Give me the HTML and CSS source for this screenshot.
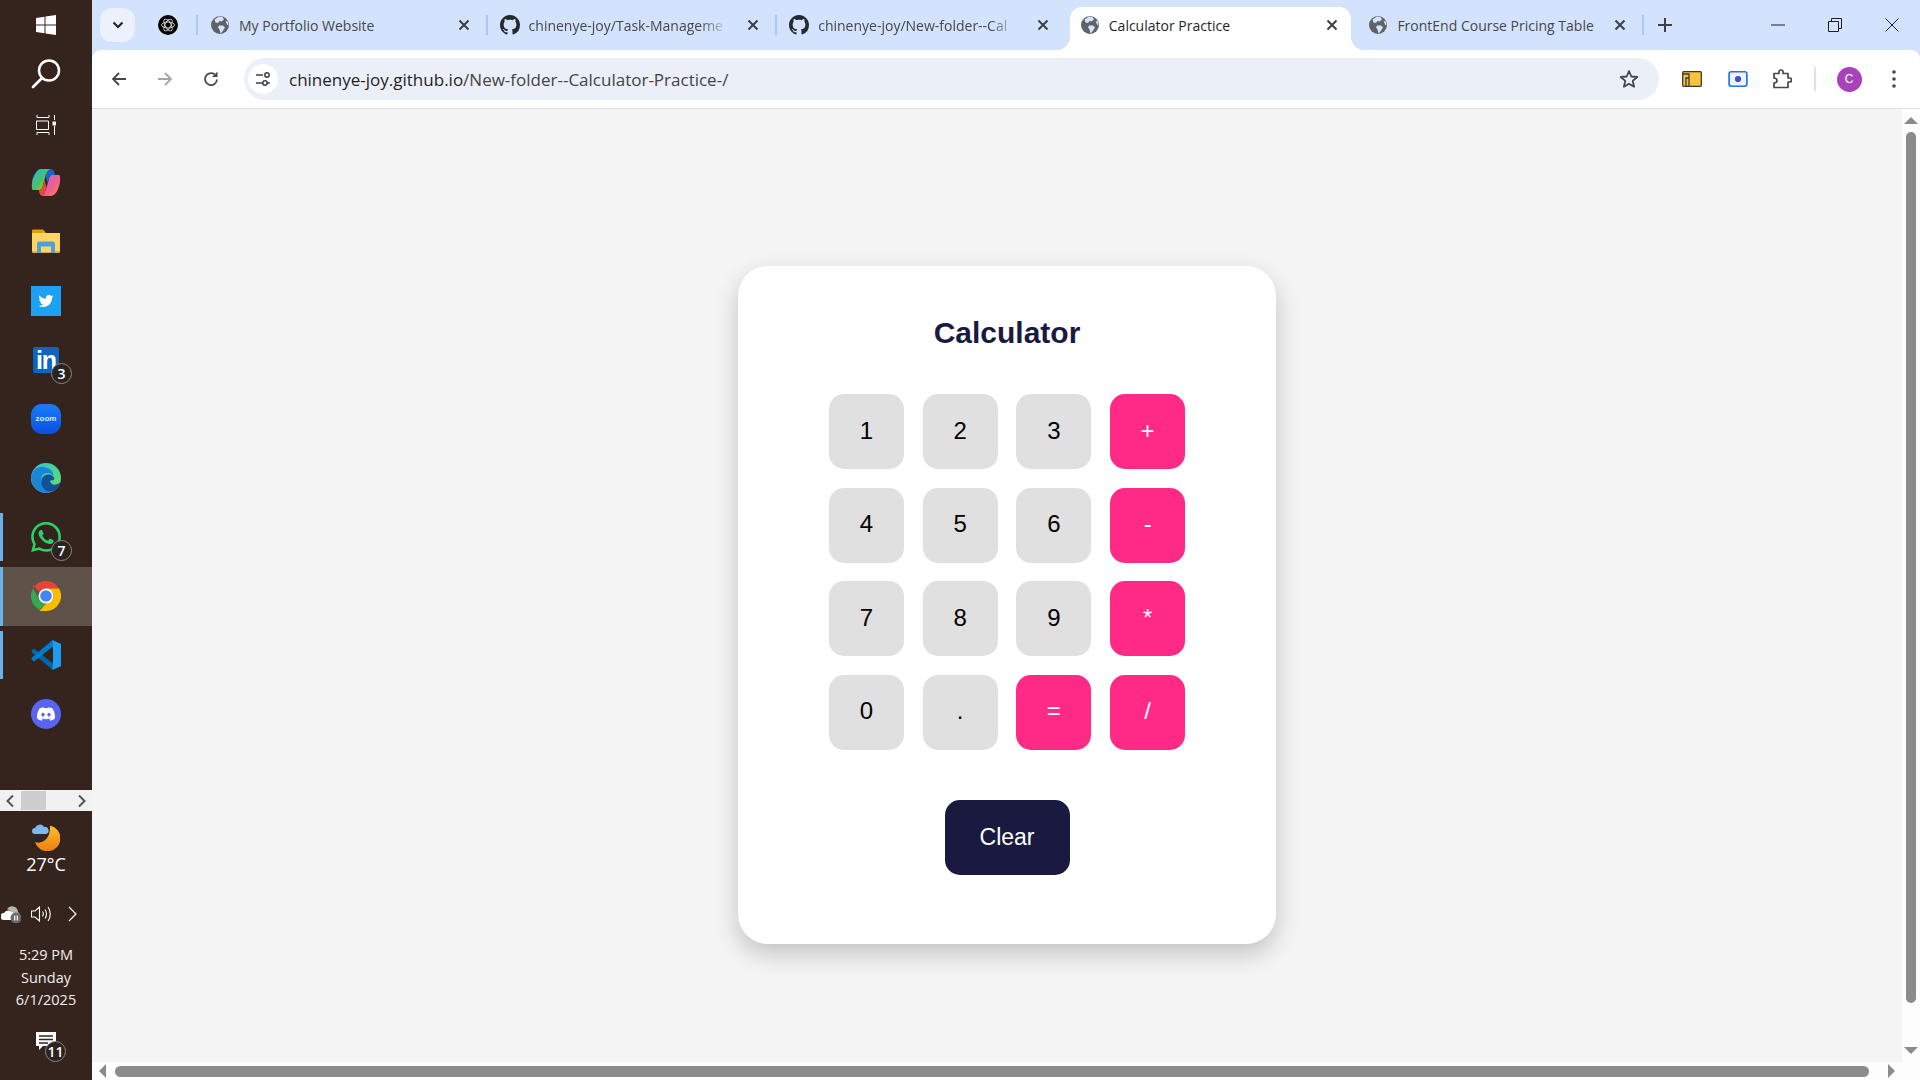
FILE: index.html
```html
<!DOCTYPE html>
<html lang="en">

<head>
    <meta charset="UTF-8">
    <title>Calculator Practice</title>
    <link rel="stylesheet" href="styles.css">
</head>

<body>
    <svg class="defs" width="0" height="0">
        <defs>
            <symbol id="globe" viewBox="0 0 20 20">
                <circle cx="10" cy="10" r="9" fill="#5f6368" />
                <path d="M9 1.5 12.5 2 14 4.5 11.5 6.5 9.5 6 8 8 5.5 7.5 4.5 4.5ZM9 10.5 13 10.5 15 12.5 12.5 16.5 10.5 18.5 9.5 14.5 8 12.5ZM15.5 6 18 6.5 18.5 10.5 17 9.5Z" fill="#d3e3fd" />
            </symbol>
            <symbol id="octo" viewBox="0 0 16 16">
                <path fill="#24292f" d="M8 0C3.58 0 0 3.58 0 8c0 3.54 2.29 6.53 5.47 7.59.4.07.55-.17.55-.38 0-.19-.01-.82-.01-1.49-2.01.37-2.53-.49-2.69-.94-.09-.23-.48-.94-.82-1.13-.28-.15-.68-.52-.01-.53.63-.01 1.08.58 1.23.82.72 1.21 1.87.87 2.33.66.07-.52.28-.87.51-1.07-1.78-.2-3.64-.89-3.64-3.95 0-.87.31-1.59.82-2.15-.08-.2-.36-1.02.08-2.12 0 0 .67-.21 2.2.82.64-.18 1.32-.27 2-.27.68 0 1.36.09 2 .27 1.53-1.04 2.2-.82 2.2-.82.44 1.1.16 1.92.08 2.12.51.56.82 1.27.82 2.15 0 3.07-1.87 3.75-3.65 3.95.29.25.54.73.54 1.48 0 1.07-.01 1.93-.01 2.2 0 .21.15.46.55.38A8.013 8.013 0 0016 8c0-4.42-3.58-8-8-8z" />
            </symbol>
            <symbol id="cross" viewBox="0 0 12 12">
                <path d="M1.5 1.5 10.5 10.5M10.5 1.5 1.5 10.5" stroke="#3c4043" stroke-width="2" fill="none" />
            </symbol>
        </defs>
    </svg>

    <div class="screen">
        <!-- vertical windows taskbar -->
        <aside class="taskbar">
            <div class="tb-start">
                <svg class="ic-win" viewBox="0 0 20 20">
                    <path fill="#fff" d="M0 3 8.5 1.8V9.5H0ZM9.5 1.6 20 0V9.5H9.5ZM0 10.5H8.5V18.2L0 17ZM9.5 10.5H20V20L9.5 18.4Z" />
                </svg>
            </div>
            <div class="tb-search">
                <svg class="ic-search" viewBox="0 0 30 30">
                    <circle cx="18" cy="11.5" r="10" fill="none" stroke="#fff" stroke-width="2.5" />
                    <path d="M11 19 2 28" stroke="#fff" stroke-width="2.8" stroke-linecap="round" />
                </svg>
            </div>
            <div class="tb-view">
                <svg class="ic-view" viewBox="0 0 20 20">
                    <path fill="none" stroke="#fff" d="M1 0V2.5H13V0M.5 6H12.5V14.5H.5ZM1 20V17.5H13V20M18.5 0V5M18.5 11V20" />
                    <rect x="16.5" y="6.5" width="4" height="4" fill="#fff" />
                </svg>
            </div>

            <div class="tb-item">
                <svg class="ic-app" viewBox="0 0 30 30">
                    <defs>
                        <linearGradient id="cpA" x1="0" y1="0" x2="1" y2="1">
                            <stop offset="0" stop-color="#22b5e8" />
                            <stop offset=".55" stop-color="#4fc25f" />
                            <stop offset="1" stop-color="#f3c623" />
                        </linearGradient>
                        <linearGradient id="cpB" x1="0" y1="0" x2="1" y2="1">
                            <stop offset="0" stop-color="#c064e0" />
                            <stop offset=".6" stop-color="#f0608a" />
                            <stop offset="1" stop-color="#f8923c" />
                        </linearGradient>
                    </defs>
                    <path fill="url(#cpA)" d="M10 1H20C17 2 15.5 5 14.5 8L11.5 19C11 21 9.5 22 8 22H1.5C0 18 1 10 4 6 5.5 3 7.5 1 10 1Z" />
                    <path fill="url(#cpB)" d="M20 28H11C13 27 14.5 23 15.5 19.5L18.5 9C19 7 20.5 7 22 7H28.5C30 11 29 17 26.5 22 25 25.5 22.5 28 20 28Z" />
                    <path fill="#1a62d8" d="M20 1C22 1 23.5 3 24 7H21C19 7 18.5 8 18 10L16.5 15 14.5 8C15.5 5 17 2 20 1Z" />
                    <path fill="#e8483c" d="M8 22C9.5 22 11 21 11.5 19L13.5 12 15.5 19.5C14.5 23 13 27 11 28 9 27.5 8 25 8 22Z" />
                </svg>
            </div>
            <div class="tb-item">
                <svg class="ic-app" viewBox="0 0 30 30">
                    <path fill="#e0a100" d="M1 3.5C1 3 1.5 2.5 2 2.5H12L15 6H1Z" />
                    <path fill="#fbd664" d="M1 6H29V24.5C29 25.2 28.5 25.7 28 25.7H2C1.5 25.7 1 25.2 1 24.5Z" />
                    <path fill="#e7b33c" d="M1 24H6V25.7H2C1.5 25.7 1 25.2 1 24.5ZM24 24H29V24.5C29 25.2 28.5 25.7 28 25.7H24Z" />
                    <path fill="#4f9fdd" d="M6 25.7V17C6 15.5 7 14.5 8.5 14.5H21.5C23 14.5 24 15.5 24 17V25.7H20V19.5H10V25.7Z" />
                </svg>
            </div>
            <div class="tb-item">
                <svg class="ic-app" viewBox="0 0 30 30">
                    <rect width="30" height="30" fill="#1da1f2" />
                    <svg x="7.5" y="7.5" width="15" height="15" viewBox="0 0 24 24">
                        <path fill="#fff" d="M23.953 4.57a10 10 0 01-2.825.775 4.958 4.958 0 002.163-2.723c-.951.555-2.005.959-3.127 1.184a4.92 4.92 0 00-8.384 4.482C7.69 8.095 4.067 6.13 1.64 3.162a4.822 4.822 0 00-.666 2.475c0 1.71.87 3.213 2.188 4.096a4.904 4.904 0 01-2.228-.616v.06a4.923 4.923 0 003.946 4.827 4.996 4.996 0 01-2.212.085 4.936 4.936 0 004.604 3.417 9.867 9.867 0 01-6.102 2.105c-.39 0-.779-.023-1.17-.067a13.995 13.995 0 007.557 2.209c9.053 0 13.998-7.496 13.998-13.985 0-.21 0-.42-.015-.63A9.935 9.935 0 0024 4.59z" />
                    </svg>
                </svg>
            </div>
            <div class="tb-item">
                <div class="ic-in">in</div>
                <span class="badge">3</span>
            </div>
            <div class="tb-item">
                <div class="ic-zoom">zoom</div>
            </div>
            <div class="tb-item">
                <svg class="ic-app" viewBox="0 0 30 30">
                    <defs>
                        <linearGradient id="edgeA" x1="0" y1="0" x2="1" y2="1">
                            <stop offset="0" stop-color="#2cc6d8" />
                            <stop offset="1" stop-color="#6fdc5c" />
                        </linearGradient>
                    </defs>
                    <circle cx="15" cy="15" r="15" fill="url(#edgeA)" />
                    <path fill="#1b86d8" d="M.1 14C1 7 7 3 13 4 19 5 23 9 22.5 13 19 8.5 12 9.5 10.5 14 9 20 14 28 21 28.5 18 30 15 30.2 12 29.8 5 28 0 22 .1 14Z" />
                    <path fill="#134f9a" d="M22 13.5C24 15 24 17 20.5 17.5H19C19 20 22 22.5 25 21.5 27 21 28.5 20 30 18.5 28.5 24 24 28.5 19 28.5 13 28.5 9.5 22 10.5 17 11.5 12 18.5 9.5 22 13.5Z" />
                </svg>
            </div>
            <div class="tb-item tb-open">
                <svg class="ic-app" viewBox="0 0 24 24">
                    <path fill="#25d366" d="M17.472 14.382c-.297-.149-1.758-.867-2.03-.967-.273-.099-.471-.148-.67.15-.197.297-.767.966-.94 1.164-.173.199-.347.223-.644.075-.297-.15-1.255-.463-2.39-1.475-.883-.788-1.48-1.761-1.653-2.059-.173-.297-.018-.458.13-.606.134-.133.298-.347.446-.52.149-.174.198-.298.298-.497.099-.198.05-.371-.025-.52-.075-.149-.669-1.612-.916-2.207-.242-.579-.487-.5-.669-.51-.173-.008-.371-.01-.57-.01-.198 0-.52.074-.792.372-.272.297-1.04 1.016-1.04 2.479 0 1.462 1.065 2.875 1.213 3.074.149.198 2.096 3.2 5.077 4.487.709.306 1.262.489 1.694.625.712.227 1.36.195 1.871.118.571-.085 1.758-.719 2.006-1.413.248-.694.248-1.289.173-1.413-.074-.124-.272-.198-.57-.347m-5.421 7.403h-.004a9.87 9.87 0 01-5.031-1.378l-.361-.214-3.741.982.998-3.648-.235-.374a9.86 9.86 0 01-1.51-5.26c.001-5.45 4.436-9.884 9.888-9.884 2.64 0 5.122 1.03 6.988 2.898a9.825 9.825 0 012.893 6.994c-.003 5.45-4.437 9.884-9.885 9.884m8.413-18.297A11.815 11.815 0 0012.05 0C5.495 0 .16 5.335.157 11.892c0 2.096.547 4.142 1.588 5.945L.057 24l6.305-1.654a11.882 11.882 0 005.683 1.448h.005c6.554 0 11.89-5.335 11.893-11.893a11.821 11.821 0 00-3.48-8.413z" />
                </svg>
                <span class="badge">7</span>
            </div>
            <div class="tb-item tb-open tb-active">
                <svg class="ic-app" viewBox="0 0 30 30">
                    <path fill="#ea4335" d="M15 0A15 15 0 0 1 28 7.5H15A7.5 7.5 0 0 0 8.5 11.25L2 3.75 2 7.5A15 15 0 0 1 15 0Z" />
                    <path fill="#34a853" d="M2 7.5 8.5 18.75A7.5 7.5 0 0 0 15 22.5L8.5 29 7.5 28A15 15 0 0 1 2 7.5Z" />
                    <path fill="#fbbc04" d="M28 7.5A15 15 0 0 1 15 30H8.5L15 22.5 21.5 18.75A7.5 7.5 0 0 0 21.5 11.25L15 7.5Z" />
                    <circle cx="15" cy="15" r="7.5" fill="#fff" />
                    <circle cx="15" cy="15" r="5.8" fill="#4285f4" />
                </svg>
            </div>
            <div class="tb-item tb-open">
                <svg class="ic-app" viewBox="0 0 30 30">
                    <path fill="#0065a9" d="M.5 10.5 3 8.5 22 23.5V28L21.5 30 1 12.5Z" />
                    <path fill="#007acc" d="M.5 19.5 3 21.5 22 6.5V2L21.5 0 1 17.5Z" />
                    <path fill="#1f9cf0" d="M21.5 0 30 4V26L21.5 30 22 22V8Z" />
                </svg>
            </div>
            <div class="tb-item">
                <svg class="ic-app" viewBox="0 0 30 30">
                    <circle cx="15" cy="15" r="15" fill="#5865f2" />
                    <svg x="6" y="6" width="18" height="18" viewBox="0 0 24 24">
                        <path fill="#fff" d="M20.317 4.3698a19.7913 19.7913 0 00-4.8851-1.5152.0741.0741 0 00-.0785.0371c-.211.3753-.4447.8648-.6083 1.2495-1.8447-.2762-3.68-.2762-5.4868 0-.1636-.3933-.4058-.8742-.6177-1.2495a.077.077 0 00-.0785-.037 19.7363 19.7363 0 00-4.8852 1.515.0699.0699 0 00-.0321.0277C.5334 9.0458-.319 13.5799.0992 18.0578a.0824.0824 0 00.0312.0561c2.0528 1.5076 4.0413 2.4228 5.9929 3.0294a.0777.0777 0 00.0842-.0276c.4616-.6304.8731-1.2952 1.226-1.9942a.076.076 0 00-.0416-.1057c-.6528-.2476-1.2743-.5495-1.8722-.8923a.077.077 0 01-.0076-.1277c.1258-.0943.2517-.1923.3718-.2914a.0743.0743 0 01.0776-.0105c3.9278 1.7933 8.18 1.7933 12.0614 0a.0739.0739 0 01.0785.0095c.1202.099.246.1981.3728.2924a.077.077 0 01-.0066.1276 12.2986 12.2986 0 01-1.873.8914.0766.0766 0 00-.0407.1067c.3604.698.7719 1.3628 1.225 1.9932a.076.076 0 00.0842.0286c1.961-.6067 3.9495-1.5219 6.0023-3.0294a.077.077 0 00.0313-.0552c.5004-5.177-.8382-9.6739-3.5485-13.6604a.061.061 0 00-.0312-.0286zM8.02 15.3312c-1.1825 0-2.1569-1.0857-2.1569-2.419 0-1.3332.9555-2.4189 2.157-2.4189 1.2108 0 2.1757 1.0952 2.1568 2.419 0 1.3332-.9555 2.4189-2.1569 2.4189zm7.9748 0c-1.1825 0-2.1569-1.0857-2.1569-2.419 0-1.3332.9554-2.4189 2.1569-2.4189 1.2108 0 2.1757 1.0952 2.1568 2.419 0 1.3332-.946 2.4189-2.1568 2.4189Z" />
                    </svg>
                </svg>
            </div>

            <div class="tb-scroll">
                <svg class="ic-chev" viewBox="0 0 10 14">
                    <path d="M8 1.5 2.5 7 8 12.5" fill="none" stroke="#555" stroke-width="2" />
                </svg>
                <div class="tb-scroll-thumb"></div>
                <svg class="ic-chev" viewBox="0 0 10 14">
                    <path d="M2 1.5 7.5 7 2 12.5" fill="none" stroke="#555" stroke-width="2" />
                </svg>
            </div>

            <div class="tb-weather">
                <svg class="ic-weather" viewBox="0 0 28 28">
                    <defs>
                        <linearGradient id="moon" x1="0" y1="0" x2="0" y2="1">
                            <stop offset="0" stop-color="#fbc02d" />
                            <stop offset="1" stop-color="#ee7d12" />
                        </linearGradient>
                    </defs>
                    <path fill="url(#moon)" d="M18 2.5A13 13 0 1 1 3 19C11 22 19 15 18 2.5Z" />
                    <path fill="#7fb8f0" d="M3 11A3 3 0 0 1 3 5 5 5 0 0 1 12 4 3.5 3.5 0 0 1 14 11Z" />
                </svg>
                <div class="temp">27°C</div>
            </div>

            <div class="tb-tray">
                <svg class="ic-cloud" viewBox="0 0 20 18">
                    <path fill="#fff" d="M3 15A3.5 3.5 0 0 1 3 8 5 5 0 0 1 11 7H14V15Z" />
                    <path fill="#b9b4b0" d="M6 4A6 6 0 0 1 17 7 4 4 0 0 1 18 12H14C14 9 12 7 10 7 9 5.5 7.5 4.5 6 4Z" />
                    <circle cx="15" cy="13" r="5.5" fill="#6b6b6b" />
                    <path d="M13.7 10.5V15.5M16.3 10.5V15.5" stroke="#fff" stroke-width="1.2" />
                </svg>
                <svg class="ic-sound" viewBox="0 0 21 18">
                    <path fill="none" stroke="#fff" stroke-width="1.1" d="M.5 6H4L8.5 2V16L4 12H.5ZM11.5 6.5C12.5 8 12.5 10 11.5 11.5M14 4.5C16 7 16 11 14 13.5M17 2C20 6 20 12 17 16" />
                </svg>
                <svg class="ic-more" viewBox="0 0 9 16">
                    <path d="M1 1 8 8 1 15" fill="none" stroke="#fff" stroke-width="1.2" />
                </svg>
            </div>

            <div class="tb-clock">
                <div>5:29 PM</div>
                <div>Sunday</div>
                <div>6/1/2025</div>
            </div>

            <div class="tb-notify">
                <svg class="ic-chat" viewBox="0 0 20 19">
                    <path fill="#fff" d="M0 0H20V14H7L3 18V14H0Z" />
                    <path d="M3 4H17M3 7.5H17M3 11H12" stroke="#35241e" stroke-width="1.3" />
                </svg>
                <span class="badge badge-wide">11</span>
            </div>
        </aside>

        <div class="browser">
            <div class="tabstrip">
                <div class="tab-list-btn">
                    <svg class="ic-down" viewBox="0 0 12 8">
                        <path d="M1.5 1.5 6 6 10.5 1.5" fill="none" stroke="#1f1f1f" stroke-width="2" />
                    </svg>
                </div>
                <div class="pinned">
                    <svg class="ic-fav" viewBox="0 0 20 20">
                        <circle cx="10" cy="10" r="10" fill="#000" />
                        <g fill="none" stroke="#ddd" stroke-width=".9">
                            <ellipse cx="10" cy="10" rx="6.5" ry="3" />
                            <ellipse cx="10" cy="10" rx="6.5" ry="3" transform="rotate(60 10 10)" />
                            <ellipse cx="10" cy="10" rx="6.5" ry="3" transform="rotate(120 10 10)" />
                        </g>
                    </svg>
                </div>
                <span class="tab-sep"></span>
                <div class="tab">
                    <svg class="ic-fav"><use href="#globe" /></svg>
                    <span class="tab-title">My Portfolio Website</span>
                    <svg class="ic-x"><use href="#cross" /></svg>
                </div>
                <span class="tab-sep"></span>
                <div class="tab">
                    <svg class="ic-fav"><use href="#octo" /></svg>
                    <span class="tab-title tab-fade">chinenye-joy/Task-Manageme</span>
                    <svg class="ic-x"><use href="#cross" /></svg>
                </div>
                <span class="tab-sep"></span>
                <div class="tab">
                    <svg class="ic-fav"><use href="#octo" /></svg>
                    <span class="tab-title tab-fade">chinenye-joy/New-folder--Cal</span>
                    <svg class="ic-x"><use href="#cross" /></svg>
                </div>
                <span class="tab-sep tab-sep-off"></span>
                <div class="tab tab-active">
                    <svg class="ic-fav"><use href="#globe" /></svg>
                    <span class="tab-title">Calculator Practice</span>
                    <svg class="ic-x"><use href="#cross" /></svg>
                </div>
                <span class="tab-sep tab-sep-off"></span>
                <div class="tab tab-last">
                    <svg class="ic-fav"><use href="#globe" /></svg>
                    <span class="tab-title">FrontEnd Course Pricing Table</span>
                    <svg class="ic-x"><use href="#cross" /></svg>
                </div>
                <span class="tab-sep"></span>
                <svg class="ic-plus" viewBox="0 0 14 14">
                    <path d="M7 0V14M0 7H14" stroke="#3c4043" stroke-width="2" />
                </svg>
                <div class="win-btns">
                    <div class="win-btn">
                        <svg class="ic-win-btn" viewBox="0 0 14 14">
                            <path d="M0 7H14" stroke="#1f1f1f" />
                        </svg>
                    </div>
                    <div class="win-btn">
                        <svg class="ic-win-btn" viewBox="0 0 14 14">
                            <path d="M.5 3.5H10.5V13.5H.5ZM3.5 3.5V.5H13.5V10.5H10.5" fill="none" stroke="#1f1f1f" />
                        </svg>
                    </div>
                    <div class="win-btn">
                        <svg class="ic-win-btn" viewBox="0 0 14 14">
                            <path d="M.5.5 13.5 13.5M13.5.5 .5 13.5" stroke="#1f1f1f" />
                        </svg>
                    </div>
                </div>
            </div>

            <div class="toolbar">
                <div class="tool-btn">
                    <svg class="ic-tool" viewBox="0 0 18 18">
                        <path d="M16 9H3M9 3 3 9 9 15" fill="none" stroke="#474747" stroke-width="1.8" />
                    </svg>
                </div>
                <div class="tool-btn">
                    <svg class="ic-tool" viewBox="0 0 18 18">
                        <path d="M2 9H15M9 3 15 9 9 15" fill="none" stroke="#a3a5a8" stroke-width="1.8" />
                    </svg>
                </div>
                <div class="tool-btn">
                    <svg class="ic-tool" viewBox="0 0 18 18">
                        <path d="M15 9.5A6 6 0 1 1 12.5 4.2" fill="none" stroke="#474747" stroke-width="1.8" />
                        <path d="M15.5 1.5V7H10Z" fill="#474747" />
                    </svg>
                </div>
                <div class="omnibox">
                    <div class="site-info">
                        <svg class="ic-tune" viewBox="0 0 16 16">
                            <path d="M1 4H8M1 12H8M11 12H15" stroke="#3c4043" stroke-width="1.6" fill="none" />
                            <circle cx="12" cy="4" r="2.2" fill="none" stroke="#3c4043" stroke-width="1.5" />
                            <circle cx="10" cy="12" r="2.2" fill="#fff" stroke="#3c4043" stroke-width="1.5" />
                        </svg>
                    </div>
                    <span class="url"><b class="url-host">chinenye-joy.github.io</b>/New-folder--Calculator-Practice-/</span>
                    <svg class="ic-star" viewBox="0 0 20 20">
                        <path d="M10 2 12.3 7.5 18.3 8 13.7 11.9 15.1 17.8 10 14.7 4.9 17.8 6.3 11.9 1.7 8 7.7 7.5Z" fill="none" stroke="#474747" stroke-width="1.8" stroke-linejoin="round" />
                    </svg>
                </div>
                <div class="tool-btn tool-first">
                    <svg class="ic-ext" viewBox="0 0 20 16">
                        <rect x=".7" y=".7" width="18.6" height="14.6" rx="1" fill="#f9c33c" stroke="#3a3a3a" stroke-width="1.3" />
                        <path d="M1 3H7V15M4 15V7H7" fill="none" stroke="#3a3a3a" stroke-width="1.3" />
                    </svg>
                </div>
                <div class="tool-btn">
                    <svg class="ic-ext" viewBox="0 0 18 16">
                        <rect x="1" y="1.5" width="16" height="13" rx="2" fill="#eef3fe" stroke="#1a73e8" stroke-width="1.5" />
                        <circle cx="9" cy="8" r="2.8" fill="#3b50d6" />
                    </svg>
                </div>
                <div class="tool-btn tool-puzzle">
                    <svg class="ic-ext" viewBox="0 0 20 20">
                        <path d="M2 4.5H7V3A2 2 0 0 1 11 3V4.5H16V9H17.5A2 2 0 0 1 17.5 13H16V18.5H2V14C4.5 14 5 12.5 5 11.5 5 10.5 4 9 2 9Z" fill="none" stroke="#474747" stroke-width="1.7" stroke-linejoin="round" />
                    </svg>
                </div>
                <span class="tool-sep"></span>
                <div class="tool-btn">
                    <span class="avatar">C</span>
                </div>
                <div class="tool-btn tool-menu">
                    <svg class="ic-dots" viewBox="0 0 4 18">
                        <circle cx="2" cy="2" r="1.8" fill="#474747" />
                        <circle cx="2" cy="9" r="1.8" fill="#474747" />
                        <circle cx="2" cy="16" r="1.8" fill="#474747" />
                    </svg>
                </div>
            </div>

            <div class="viewport">
                <main class="page">
                    <section class="calculator">
                        <h2 class="calc-title">Calculator</h2>
                        <div class="keys">
                            <button class="key">1</button>
                            <button class="key">2</button>
                            <button class="key">3</button>
                            <button class="key key-op">+</button>
                            <button class="key">4</button>
                            <button class="key">5</button>
                            <button class="key">6</button>
                            <button class="key key-op">-</button>
                            <button class="key">7</button>
                            <button class="key">8</button>
                            <button class="key">9</button>
                            <button class="key key-op">*</button>
                            <button class="key">0</button>
                            <button class="key">.</button>
                            <button class="key key-op">=</button>
                            <button class="key key-op">/</button>
                        </div>
                        <button class="clear">Clear</button>
                    </section>
                </main>
                <div class="vbar">
                    <span class="arrow-up"></span>
                    <span class="vbar-thumb"></span>
                    <span class="arrow-down"></span>
                </div>
            </div>
            <div class="hbar">
                <span class="arrow-left"></span>
                <span class="hbar-thumb"></span>
                <span class="arrow-right"></span>
            </div>
        </div>
    </div>
</body>

</html>
```

FILE: styles.css
```css
* {
    box-sizing: border-box;
}

body {
    margin: 0;
    font-family: "Open Sans", "Liberation Sans", sans-serif;
    overflow: hidden;
}

.defs {
    display: block;
    height: 0;
}

.screen {
    display: flex;
    width: 1920px;
    height: 1080px;
    overflow: hidden;
}

/* taskbar */
.taskbar {
    width: 92px;
    height: 1080px;
    flex: none;
    display: flex;
    flex-direction: column;
    background-color: #35241e;
    color: #fff;
}

.tb-start,
.tb-search,
.tb-view,
.tb-item {
    display: flex;
    align-items: center;
    justify-content: center;
    position: relative;
    flex: none;
}

.tb-start {
    height: 50px;
}

.tb-search {
    height: 47px;
}

.tb-view {
    height: 56.5px;
}

.tb-item {
    height: 59px;
}

.ic-win {
    width: 20px;
    height: 20px;
}

.ic-search {
    width: 30px;
    height: 30px;
}

.ic-view {
    width: 20px;
    height: 20px;
}

.ic-app {
    width: 30px;
    height: 30px;
}

.ic-in {
    width: 26px;
    height: 26px;
    border-radius: 2px;
    background-color: #0a66c2;
    color: #fff;
    font: bold 25px/26px "Liberation Sans", sans-serif;
    text-align: center;
    letter-spacing: -1px;
}

.ic-zoom {
    width: 30px;
    height: 30px;
    border-radius: 11px;
    background: linear-gradient(#1a7cf8, #0b4fe0);
    color: #dce9ff;
    font: bold 8px/30px "Liberation Sans", sans-serif;
    text-align: center;
}

.badge {
    position: absolute;
    left: 51px;
    top: 32px;
    width: 21px;
    height: 21px;
    border-radius: 50%;
    border: 1px solid #8d8581;
    background-color: #2b2320;
    color: #fff;
    font: 600 14px/19px "Open Sans", sans-serif;
    text-align: center;
}

.tb-open::before {
    content: "";
    position: absolute;
    left: 0;
    top: 5.5px;
    width: 3px;
    height: 48px;
    background-color: #6cb2e8;
}

.tb-active {
    background-color: #5f5249;
}

.tb-active::before {
    top: 0;
    height: 59px;
}

.tb-scroll {
    height: 21px;
    margin-top: 46.5px;
    flex: none;
    display: flex;
    align-items: center;
    background-color: #f1f1f1;
    padding: 0 5px;
}

.ic-chev {
    width: 10px;
    height: 14px;
}

.tb-scroll-thumb {
    width: 25px;
    height: 19px;
    margin: 0 auto 0 6px;
    background-color: #cdcdcd;
}

.tb-weather {
    margin-top: 12px;
    display: flex;
    flex-direction: column;
    align-items: center;
}

.ic-weather {
    width: 28px;
    height: 28px;
}

.temp {
    margin-top: 2px;
    font-size: 18px;
    line-height: 22px;
}

.tb-tray {
    margin-top: 28px;
    height: 22px;
    display: flex;
    align-items: center;
    padding-left: 1px;
}

.ic-cloud {
    width: 20px;
    height: 18px;
}

.ic-sound {
    width: 21px;
    height: 18px;
    margin-left: 10px;
}

.ic-more {
    width: 9px;
    height: 16px;
    margin-left: 16px;
}

.tb-clock {
    margin-top: 19px;
    font-size: 14.5px;
    line-height: 22.5px;
    text-align: center;
    color: #f1eeec;
}

.tb-notify {
    position: relative;
    margin-top: 20px;
    display: flex;
    justify-content: center;
}

.ic-chat {
    width: 20px;
    height: 19px;
}

.badge-wide {
    left: 45px;
    top: 9px;
}

/* browser */
.browser {
    flex: 1;
    display: flex;
    flex-direction: column;
    min-width: 0;
    background-color: #d3e3fd;
}

.tabstrip {
    height: 50px;
    flex: none;
    display: flex;
    align-items: center;
    padding-left: 8px;
    font-size: 14px;
    color: #474747;
}

.tab-list-btn {
    width: 35px;
    height: 34px;
    border-radius: 12px;
    background-color: #ebf1fd;
    display: flex;
    align-items: center;
    justify-content: center;
}

.ic-down {
    width: 12px;
    height: 8px;
}

.pinned {
    width: 53px;
    flex: none;
    display: flex;
    justify-content: center;
    margin: 0 2px 0 6px;
}

.tab-sep {
    width: 2px;
    height: 20px;
    flex: none;
    background-color: #a8c7fa;
}

.tab-sep-off {
    visibility: hidden;
}

.tab {
    width: 287.6px;
    height: 43px;
    flex: none;
    align-self: flex-end;
    display: flex;
    align-items: center;
    padding: 0 16px 7px 12px;
    position: relative;
}

.tab-active {
    width: 281px;
    margin: 0 3.6px 0 3px;
    padding: 0 13px 7px 10px;
    background-color: #fff;
    border-radius: 12px 12px 0 0;
    color: #1f1f1f;
}

.tab-last {
    width: 285.6px;
}

.tab-active::before,
.tab-active::after {
    content: "";
    position: absolute;
    bottom: 0;
    width: 14px;
    height: 14px;
}

.tab-active::before {
    left: -14px;
    background: radial-gradient(circle at 0 0, transparent 14px, #fff 14.5px);
}

.tab-active::after {
    right: -14px;
    background: radial-gradient(circle at 100% 0, transparent 14px, #fff 14.5px);
}

.ic-fav {
    width: 20px;
    height: 20px;
    flex: none;
}

.tab-title {
    flex: 1;
    min-width: 0;
    margin: 0 10px 0 9px;
    white-space: nowrap;
}

.tab-fade {
    -webkit-mask-image: linear-gradient(to right, #000 82%, transparent 96%);
    mask-image: linear-gradient(to right, #000 82%, transparent 96%);
}

.ic-x {
    width: 12px;
    height: 12px;
    flex: none;
}

.ic-plus {
    width: 14px;
    height: 14px;
    margin-left: 14px;
}

.win-btns {
    display: flex;
    margin-left: auto;
}

.win-btn {
    width: 57px;
    height: 50px;
    display: flex;
    align-items: center;
    justify-content: center;
}

.ic-win-btn {
    width: 14px;
    height: 14px;
}

.toolbar {
    height: 59px;
    flex: none;
    display: flex;
    align-items: center;
    padding-left: 4px;
    background-color: #fff;
    border-bottom: 1px solid #dcdfe3;
    border-radius: 9px 9px 0 0;
}

.tool-btn {
    width: 46px;
    height: 42px;
    flex: none;
    display: flex;
    align-items: center;
    justify-content: center;
}

.ic-tool {
    width: 18px;
    height: 18px;
}

.omnibox {
    width: 1415px;
    height: 42px;
    margin-left: 10px;
    flex: none;
    display: flex;
    align-items: center;
    padding: 0 20px 0 4px;
    border-radius: 21px;
    background-color: #ebeff8;
}

.site-info {
    width: 30px;
    height: 30px;
    border-radius: 50%;
    background-color: #fff;
    display: flex;
    align-items: center;
    justify-content: center;
}

.ic-tune {
    width: 16px;
    height: 16px;
}

.url {
    flex: 1;
    margin-left: 11px;
    font-size: 17px;
    color: #444;
    white-space: nowrap;
}

.url-host {
    font-weight: normal;
    color: #1f1f1f;
}

.ic-star {
    width: 20px;
    height: 20px;
}

.tool-first {
    margin-left: 10px;
}

.tool-puzzle {
    margin-left: -2px;
}

.tool-menu {
    margin-left: -1px;
}

.ic-ext {
    width: 20px;
    height: 20px;
}

.tool-sep {
    width: 2px;
    height: 24px;
    margin: 0 10px 0 9px;
    background-color: #d3e3fd;
}

.avatar {
    width: 25px;
    height: 25px;
    border-radius: 50%;
    background-color: #a742b8;
    color: #fff;
    font: 12px/25px "Liberation Sans", sans-serif;
    text-align: center;
}

.ic-dots {
    width: 4px;
    height: 18px;
}

/* page */
.viewport {
    flex: 1;
    min-height: 0;
    display: flex;
    background-color: #fdfdfd;
}

.page {
    flex: 1;
    background-color: #f4f4f4;
    display: flex;
    justify-content: center;
    align-items: flex-start;
    padding: 157px 0 0 20px;
}

.calculator {
    width: 538px;
    height: 678px;
    padding-top: 50px;
    display: flex;
    flex-direction: column;
    align-items: center;
    background-color: #fff;
    border-radius: 30px;
    box-shadow: 0 10px 25px rgba(0, 0, 0, 0.2);
    font-family: "Liberation Sans", Arial, sans-serif;
}

.calc-title {
    margin: 0 0 44px;
    font-size: 30px;
    line-height: 34px;
    color: #1a1a40;
}

.keys {
    display: grid;
    grid-template-columns: repeat(4, 75px);
    grid-auto-rows: 75px;
    gap: 18.6px 18.75px;
}

.key {
    border: none;
    padding: 0 0 2px;
    border-radius: 15px;
    background-color: #e0e0e0;
    color: #000;
    font: 24px "Liberation Sans", Arial, sans-serif;
}

.key-op {
    background-color: #ff2a85;
    color: #fff;
}

.clear {
    width: 125px;
    height: 75px;
    margin-top: 50.2px;
    border: none;
    border-radius: 15px;
    background-color: #1a1a40;
    color: #fff;
    font: 23px "Liberation Sans", Arial, sans-serif;
}

/* scrollbars */
.vbar {
    width: 18px;
    flex: none;
    display: flex;
    flex-direction: column;
    align-items: center;
    padding-top: 8px;
}

.vbar-thumb {
    width: 10px;
    height: 871px;
    margin-top: 8px;
    border-radius: 5px;
    background-color: #8b8b8b;
}

.arrow-up,
.arrow-down {
    width: 0;
    height: 0;
    border-left: 7px solid transparent;
    border-right: 7px solid transparent;
}

.arrow-up {
    border-bottom: 7px solid #8b8b8b;
}

.arrow-down {
    margin-top: 44px;
    border-top: 7px solid #8b8b8b;
}

.hbar {
    height: 18px;
    flex: none;
    display: flex;
    align-items: center;
    padding-left: 7px;
    background-color: #fdfdfd;
}

.hbar-thumb {
    width: 1754px;
    height: 11px;
    margin-left: 9px;
    border-radius: 6px;
    background-color: #8b8b8b;
}

.arrow-left,
.arrow-right {
    width: 0;
    height: 0;
    border-top: 7px solid transparent;
    border-bottom: 7px solid transparent;
}

.arrow-left {
    border-right: 7px solid #8b8b8b;
}

.arrow-right {
    margin-left: 19px;
    border-left: 7px solid #8b8b8b;
}
```
